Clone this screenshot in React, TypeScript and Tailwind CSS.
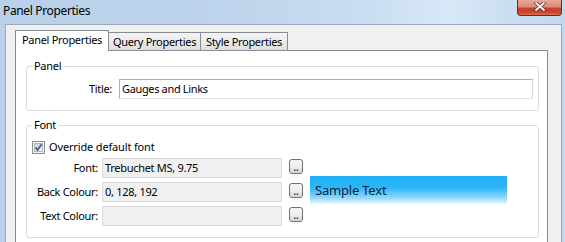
import React from "react";

const font = { fontFamily: '"Noto Sans", "Open Sans", sans-serif' };

function CheckBox() {
  return (
    <svg width="13" height="13" viewBox="0 0 13 13" className="shrink-0">
      <defs>
        <linearGradient id="cbg" x1="0" y1="0" x2="1" y2="1">
          <stop offset="0" stopColor="#c9ced6" />
          <stop offset="1" stopColor="#f4f6f8" />
        </linearGradient>
      </defs>
      <rect x="0.5" y="0.5" width="12" height="12" fill="#f6f6f6" stroke="#8e8f8f" />
      <rect x="2.5" y="2.5" width="8" height="8" fill="url(#cbg)" stroke="#b4b9c0" />
      <path d="M3.6 6.4 L5.6 9 L9.6 3.3" fill="none" stroke="#4a5e9a" strokeWidth="1.8" />
    </svg>
  );
}

function DotButton() {
  return (
    <div className="ml-[7px] mt-[1px] flex h-[15px] w-[14px] shrink-0 items-end justify-center rounded-[3px] border border-[#707070] bg-[linear-gradient(180deg,#f8f8f8_0%,#ececec_50%,#d8d8d8_100%)] pb-[2px]">
      <span className="text-[9px] font-bold leading-[6px] text-[#222]">..</span>
    </div>
  );
}

function FontRow({ label, value }: { label: string; value: string }) {
  return (
    <div className="flex h-[20px] items-start">
      <div className="flex h-[20px] w-[71px] items-center justify-end text-[11px] tracking-[-0.3px] text-black">{label}</div>
      <div className="ml-[4px] flex h-[20px] w-[180px] items-center border border-[#d9d9d9] bg-[#f0f0f0] pl-[2px] text-[11px] tracking-[-0.3px] text-black">
        {value}
      </div>
      <DotButton />
    </div>
  );
}

export default function App() {
  return (
    <div
      className="h-[242px] w-[565px] overflow-hidden bg-[linear-gradient(90deg,#b8d0e9_0%,#bdd4ec_40%,#c9def2_65%,#d8e8f7_80%,#c8ddf1_92%,#c2d8ee_100%)] text-black"
      style={font}
    >
      <div className="flex h-[24px] items-start justify-between">
        <div className="flex h-[22px] items-center pl-[3px] text-[12px] tracking-[-0.35px] text-black">Panel Properties</div>
        <div className="mr-[3px] flex h-[16px] w-[45px] items-center justify-center rounded-b-[4px] border border-t-0 border-[#6a2a20] bg-[linear-gradient(180deg,#e9a899_0%,#dc8b78_45%,#c8442c_55%,#c7432b_80%,#d9704f_100%)]">
          <svg width="12" height="9" viewBox="0 0 12 9" className="-mt-[3px]">
            <path d="M2 1 L10 8 M10 1 L2 8" stroke="#5a2a22" strokeWidth="3.4" strokeLinecap="round" />
            <path d="M2 1 L10 8 M10 1 L2 8" stroke="#ffffff" strokeWidth="1.8" strokeLinecap="round" />
          </svg>
        </div>
      </div>

      <div className="ml-[5px] flex h-[240px] w-[557px] flex-col border border-[#98a9bd] bg-[#f0f0f0] pl-[9px] pr-[13px] pt-[5px]">
        <div className="relative z-10 -mb-px flex h-[21px] items-end">
          <div className="h-[21px] w-[94px] border border-b-0 border-[#898c95] bg-white pt-[2px] text-center text-[11px] leading-[14px] tracking-[-0.3px]">
            Panel Properties
          </div>
          <div className="-ml-px h-[19px] w-[93px] border border-[#898c95] bg-[linear-gradient(180deg,#f4f4f4_0%,#ebebeb_50%,#dedede_100%)] pt-[2px] text-center text-[11px] leading-[14px] tracking-[-0.3px]">
            Query Properties
          </div>
          <div className="-ml-px h-[19px] w-[88px] border border-[#898c95] bg-[linear-gradient(180deg,#f4f4f4_0%,#ebebeb_50%,#dedede_100%)] pt-[2px] text-center text-[11px] leading-[14px] tracking-[-0.3px]">
            Style Properties
          </div>
        </div>

        <div className="flex-1 border border-[#898c95] bg-white pl-[10px] pr-[8px]">
          <fieldset className="mt-[8px] rounded-[3px] border border-[#d5dfe5] pb-[11px] pt-[6px]">
            <legend className="ml-[5px] px-[2px] text-[11px] leading-[14px] tracking-[-0.3px]">Panel</legend>
            <div className="flex h-[20px] items-center">
              <div className="w-[85px] text-right text-[11px] tracking-[-0.3px]">Title:</div>
              <div className="ml-[7px] mr-[5px] flex h-[20px] flex-1 items-center border border-[#abadb3] border-b-[#dfe3e8] border-r-[#d3d7de] bg-white pl-[2px] text-[11px] tracking-[-0.35px]">
                Gauges and Links
              </div>
            </div>
          </fieldset>

          <fieldset className="mt-[7px] rounded-[3px] border border-[#d5dfe5] pb-[11px]">
            <legend className="ml-[5px] px-[2px] text-[11px] leading-[14px] tracking-[-0.3px]">Font</legend>
            <div className="mt-[8px] flex h-[15px] items-center pl-[5px]">
              <CheckBox />
              <span className="ml-[4px] text-[11px] tracking-[-0.15px]">Override default font</span>
            </div>
            <div className="mt-[3px] flex">
              <div className="flex flex-col gap-[4px]">
                <FontRow label="Font:" value="Trebuchet MS, 9.75" />
                <FontRow label="Back Colour:" value="0, 128, 192" />
                <FontRow label="Text Colour:" value="" />
              </div>
              <div className="ml-[7px] mt-[18px] flex h-[29px] w-[197px] items-center bg-[linear-gradient(180deg,#1fb0f7_0%,#2db6f8_40%,#8fd6fb_75%,#ffffff_100%)] pl-[5px] text-[13px] tracking-[-0.2px] text-[#0b2340]">
                Sample Text
              </div>
            </div>
          </fieldset>
        </div>
      </div>
    </div>
  );
}
